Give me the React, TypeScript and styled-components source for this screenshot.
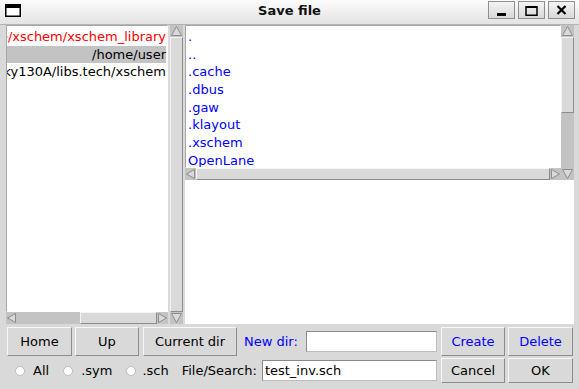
import React from 'react';
import styled, { createGlobalStyle } from 'styled-components';

const GlobalStyle = createGlobalStyle`
  html, body { margin: 0; padding: 0; background: #d9d9d9; }
  body { font-family: 'DejaVu Sans', 'Noto Sans', sans-serif; font-size: 13px; }
  * { box-sizing: border-box; }
`;

const Window = styled.div`
  width: 579px;
  height: 389px;
  background: #d9d9d9;
  display: flex;
  flex-direction: column;
  overflow: hidden;
`;

const TitleBar = styled.div`
  height: 25px;
  flex: none;
  border-bottom: 1px solid #b4b4b4;
  background: linear-gradient(#fcfcfc, #e3e3e3);
  display: grid;
  grid-template-columns: 1fr auto 1fr;
  align-items: start;
`;

const TitleIcon = styled.svg`
  margin: 4px 0 0 5px;
`;

const Title = styled.div`
  font-weight: bold;
  font-size: 13px;
  line-height: 22px;
  color: #111;
`;

const TitleButtons = styled.div`
  justify-self: end;
  display: flex;
  gap: 3px;
  margin: 1px 4px 0 0;
`;

const TitleButton = styled.div`
  width: 27px;
  height: 18px;
  border: 1px solid #8f8f8f;
  background: linear-gradient(#f4f4f4, #d8d8d8);
  display: flex;
  align-items: center;
  justify-content: center;
`;

const Panes = styled.div`
  height: 299px;
  flex: none;
  display: flex;
  padding: 0 5px 0 6px;
`;

const LeftPane = styled.div`
  width: 177px;
  display: grid;
  grid-template-columns: 162px 13px;
  grid-template-rows: 1fr 12px;
  grid-template-areas: 'list vs' 'hs vs';
  column-gap: 2px;
`;

const Sash = styled.div`
  width: 2px;
`;

const RightPane = styled.div`
  flex: 1;
  background: #fff;
  display: grid;
  grid-template-columns: 1fr 13px;
  grid-template-rows: 143px 12px 1fr;
  grid-template-areas: 'list vs' 'hs vs' 'rest rest';
`;

const ListBox = styled.div<{ $right?: boolean }>`
  grid-area: list;
  background: #fff;
  border: 1px solid;
  border-color: #a6a6a6 #ffffff #ffffff #a6a6a6;
  padding: 2px ${p => (p.$right ? '1px' : '0')} 0 ${p => (p.$right ? '0' : '2px')};
  overflow: hidden;
`;

const ListRow = styled.div<{ $color: string; $selected?: boolean; $right?: boolean }>`
  height: 17.67px;
  line-height: 17.67px;
  white-space: nowrap;
  color: ${p => p.$color};
  background: ${p => (p.$selected ? '#c3c3c3' : 'transparent')};
  display: flex;
  justify-content: ${p => (p.$right ? 'flex-end' : 'flex-start')};
  & > span {
    flex: none;
  }
`;

const Track = styled.div<{ $vertical?: boolean; $area: string }>`
  grid-area: ${p => p.$area};
  display: flex;
  flex-direction: ${p => (p.$vertical ? 'column' : 'row')};
  background: #c3c3c3;
`;

const Slot = styled.div<{ $vertical?: boolean }>`
  flex: 1;
  display: flex;
  flex-direction: ${p => (p.$vertical ? 'column' : 'row')};
`;

const Filler = styled.div<{ $grow: number }>`
  flex: ${p => p.$grow} 1 0;
`;

const Thumb = styled.div<{ $grow: number }>`
  flex: ${p => p.$grow} 1 0;
  background: #d9d9d9;
  border: 1px solid;
  border-color: #f4f4f4 #8c8c8c #8c8c8c #f4f4f4;
`;

const ArrowSvg = styled.svg`
  flex: none;
  display: block;
`;

type Dir = 'up' | 'down' | 'left' | 'right';

const arrowPoints: Record<Dir, string> = {
  up: '6.5,1.5 1.5,10.5 11.5,10.5',
  down: '1.5,1.5 11.5,1.5 6.5,10.5',
  left: '1.5,6 9.5,1.5 9.5,10.5',
  right: '1.5,1.5 9.5,6 1.5,10.5',
};

const Arrow: React.FC<{ dir: Dir }> = ({ dir }) => {
  const vertical = dir === 'up' || dir === 'down';
  const w = vertical ? 13 : 11;
  return (
    <ArrowSvg width={w} height={12} viewBox={`0 0 ${w} 12`}>
      <polygon points={arrowPoints[dir]} fill="#dadada" stroke="#8e8e8e" strokeWidth="1" />
    </ArrowSvg>
  );
};

const Scrollbar: React.FC<{ vertical?: boolean; from: number; to: number; area: string }> = ({
  vertical,
  from,
  to,
  area,
}) => (
  <Track $vertical={vertical} $area={area}>
    <Arrow dir={vertical ? 'up' : 'left'} />
    <Slot $vertical={vertical}>
      <Filler $grow={from} />
      <Thumb $grow={to - from} />
      <Filler $grow={1 - to} />
    </Slot>
    <Arrow dir={vertical ? 'down' : 'right'} />
  </Track>
);

const Controls = styled.div`
  flex: none;
  margin-top: 3px;
  padding: 0 6px 0 7px;
  display: grid;
  grid-template-columns: 1fr 64px 65px;
  grid-template-rows: 29px 25px;
  column-gap: 3px;
  row-gap: 2px;
`;

const ControlRow = styled.div<{ $pad?: number }>`
  display: flex;
  align-items: center;
  padding-left: ${p => p.$pad || 0}px;
  margin-right: 1px;
`;

const Button = styled.button<{ $width?: number; $blue?: boolean; $gap?: number }>`
  width: ${p => (p.$width ? `${p.$width}px` : '100%')};
  height: 100%;
  margin-right: ${p => p.$gap || 0}px;
  flex: none;
  padding: 0;
  font: inherit;
  color: ${p => (p.$blue ? '#0000ff' : '#000')};
  background: #d9d9d9;
  border: 1px solid;
  border-color: #f7f7f7 #8c8c8c #8c8c8c #f7f7f7;
`;

const Label = styled.span<{ $blue?: boolean; $gap: number }>`
  color: ${p => (p.$blue ? '#0000ff' : '#000')};
  margin-right: ${p => p.$gap}px;
  white-space: nowrap;
`;

const Entry = styled.div`
  flex: 1;
  height: 21px;
  background: #fff;
  border: 1px solid;
  border-color: #8a8a8a #bdbdbd #bdbdbd #8a8a8a;
  padding-left: 2px;
  line-height: 19px;
  color: #000;
`;

const Radio = styled.label<{ $gap?: number; $after?: number }>`
  display: flex;
  align-items: center;
  gap: ${p => p.$gap ?? 8}px;
  margin-right: ${p => p.$after ?? 14}px;
`;

const RadioDot = styled.span`
  width: 10px;
  height: 10px;
  border-radius: 50%;
  background: #fff;
  border: 1px solid #bdbdbd;
`;

const leftItems = [
  { text: '/usr/local/share/xschem/xschem_library', color: '#ff0000' },
  { text: '/home/user', color: '#000', selected: true },
  { text: '/usr/share/pdk/sky130A/libs.tech/xschem', color: '#000' },
];

const rightItems = ['.', '..', '.cache', '.dbus', '.gaw', '.klayout', '.xschem', 'OpenLane'];

export default function App() {
  return (
    <>
      <GlobalStyle />
      <Window>
        <TitleBar>
          <TitleIcon width="16" height="13" viewBox="0 0 16 13">
            <rect x="0.75" y="0.75" width="14.5" height="11.5" fill="#fff" stroke="#000" strokeWidth="1.5" />
            <rect x="0" y="0" width="16" height="4" fill="#000" />
          </TitleIcon>
          <Title>Save file</Title>
          <TitleButtons>
            <TitleButton>
              <svg width="25" height="16" viewBox="0 0 25 16">
                <rect x="8" y="11" width="9" height="3" fill="#000" />
              </svg>
            </TitleButton>
            <TitleButton>
              <svg width="25" height="16" viewBox="0 0 25 16">
                <rect x="7" y="4.75" width="11" height="8.5" fill="none" stroke="#000" strokeWidth="1.5" />
                <rect x="7" y="4" width="11" height="2" fill="#000" />
              </svg>
            </TitleButton>
            <TitleButton>
              <svg width="25" height="16" viewBox="0 0 25 16">
                <path d="M8.5 4 L16.5 12 M16.5 4 L8.5 12" stroke="#000" strokeWidth="2.2" />
              </svg>
            </TitleButton>
          </TitleButtons>
        </TitleBar>

        <Panes>
          <LeftPane>
            <ListBox $right>
              {leftItems.map(item => (
                <ListRow key={item.text} $color={item.color} $selected={item.selected} $right>
                  <span>{item.text}</span>
                </ListRow>
              ))}
            </ListBox>
            <Scrollbar vertical from={0} to={1} area="vs" />
            <Scrollbar from={0.457} to={1} area="hs" />
          </LeftPane>
          <Sash />
          <RightPane>
            <ListBox>
              {rightItems.map(name => (
                <ListRow key={name} $color="#0000ff">
                  <span>{name}</span>
                </ListRow>
              ))}
            </ListBox>
            <Scrollbar vertical from={0} to={0.57} area="vs" />
            <Scrollbar from={0} to={1} area="hs" />
          </RightPane>
        </Panes>

        <Controls>
          <ControlRow>
            <Button $width={65} $gap={3}>Home</Button>
            <Button $width={64} $gap={4}>Up</Button>
            <Button $width={94} $gap={7}>Current dir</Button>
            <Label $blue $gap={8}>New dir:</Label>
            <Entry />
          </ControlRow>
          <Button $blue>Create</Button>
          <Button $blue>Delete</Button>

          <ControlRow $pad={8}>
            <Radio>
              <RadioDot />
              All
            </Radio>
            <Radio>
              <RadioDot />
              .sym
            </Radio>
            <Radio $gap={6} $after={13}>
              <RadioDot />
              .sch
            </Radio>
            <Label $gap={5}>File/Search:</Label>
            <Entry>test_inv.sch</Entry>
          </ControlRow>
          <Button>Cancel</Button>
          <Button>OK</Button>
        </Controls>
      </Window>
    </>
  );
}
